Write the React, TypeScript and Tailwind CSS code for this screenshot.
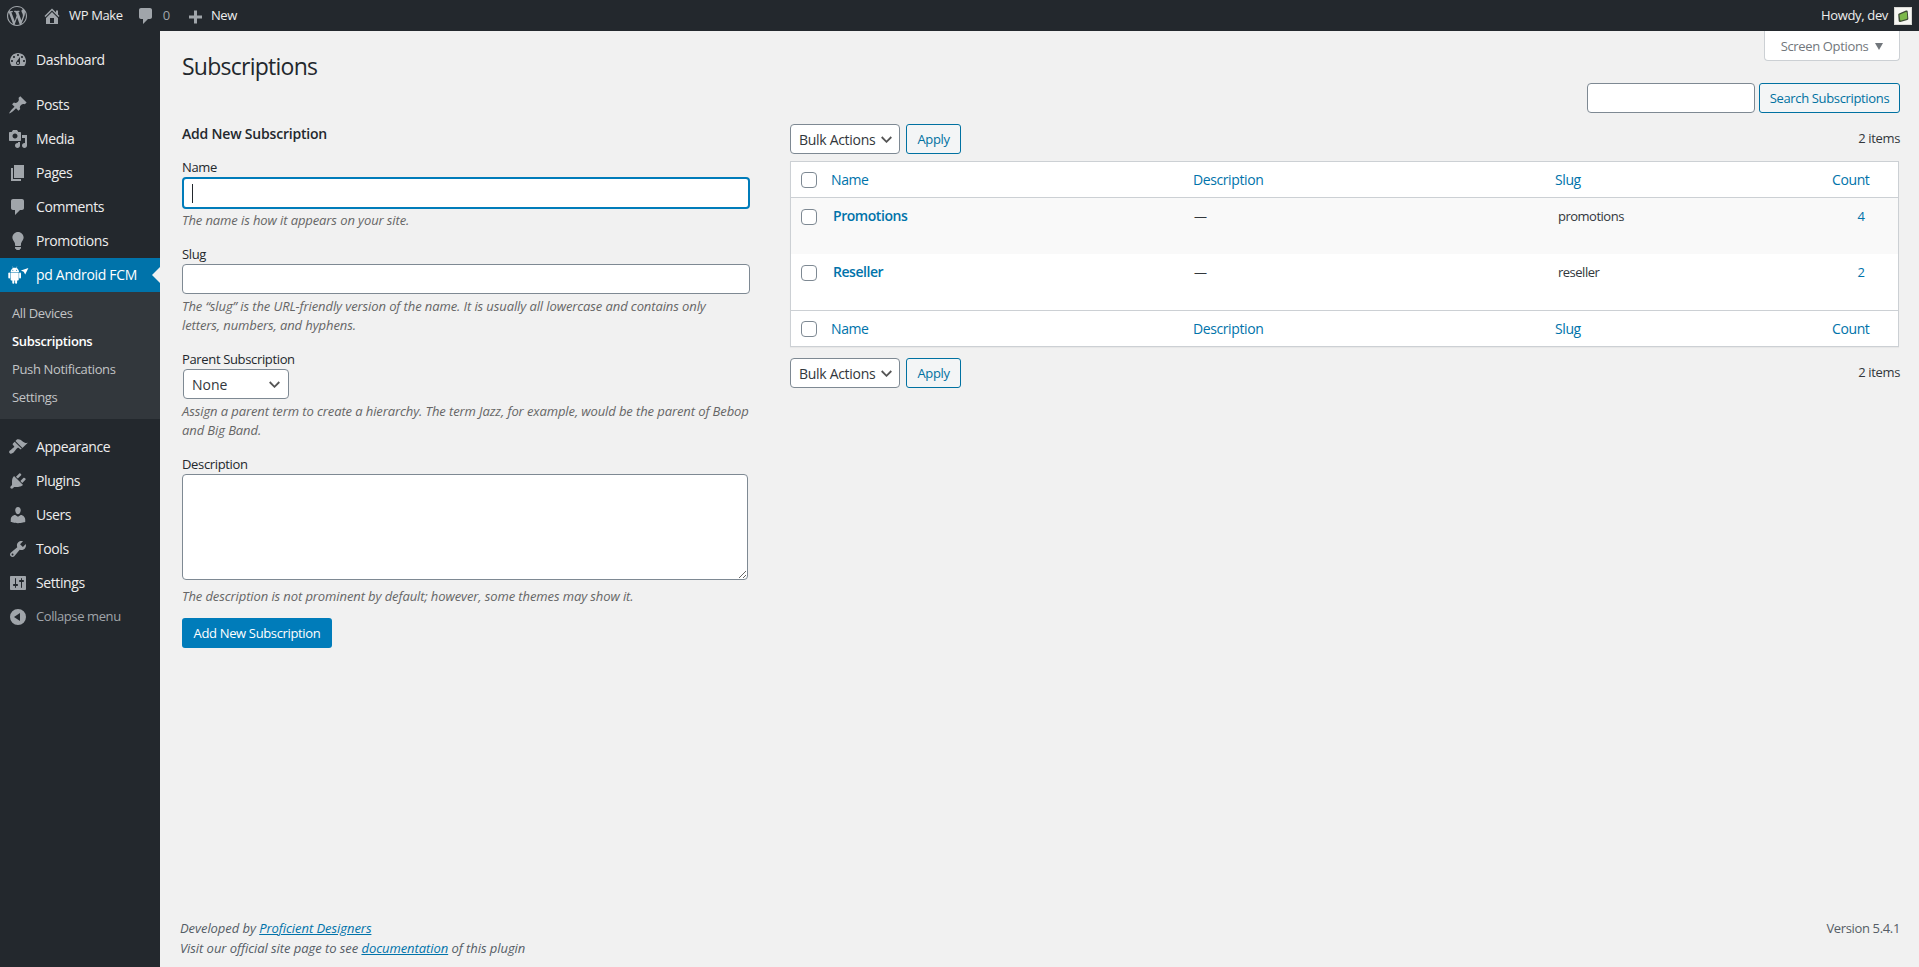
import React from "react";

const P = {
  wp: "M20 10c0-5.51-4.49-10-10-10C4.48 0 0 4.49 0 10c0 5.52 4.48 10 10 10 5.51 0 10-4.48 10-10zM7.78 15.37L4.37 6.22c.55-.02 1.17-.08 1.17-.08.5-.06.44-1.13-.06-1.11 0 0-1.45.11-2.37.11-.18 0-.37 0-.58-.01C4.12 2.69 6.87 1.11 10 1.11c2.33 0 4.45.87 6.05 2.34-.68-.11-1.65.39-1.65 1.58 0 .74.45 1.36.9 2.1.35.61.55 1.36.55 2.46 0 1.49-1.4 5-1.4 5l-3.03-8.37c.54-.02.82-.17.82-.17.5-.05.44-1.25-.06-1.22 0 0-1.44.12-2.38.12-.87 0-2.33-.12-2.33-.12-.5-.03-.56 1.2-.06 1.22l.92.08 1.26 3.41zM17.41 10c.24-.64.74-1.87.43-4.25.7 1.29 1.05 2.71 1.05 4.25 0 3.29-1.73 6.24-4.4 7.78.97-2.59 1.94-5.2 2.92-7.78zM6.1 18.09C3.12 16.65 1.11 13.53 1.11 10c0-1.3.23-2.48.72-3.59C3.25 10.3 4.67 14.2 6.1 18.09zm4.03-6.63l2.58 6.98c-.86.29-1.76.45-2.71.45-.79 0-1.57-.11-2.29-.33.81-2.38 1.62-4.74 2.42-7.1z",
  home: "M16 8.5l1.53 1.53-1.06 1.06L10 4.62l-6.47 6.47-1.06-1.06L10 2.5l4 4v-2h2v4zm-6-2.46l6 5.99V18H4v-5.97zM12 17v-5H8v5h4z",
  comment: "M5 2h9c1.1 0 2 .9 2 2v7c0 1.1-.9 2-2 2h-2l-5 5v-5H5c-1.1 0-2-.9-2-2V4c0-1.1.9-2 2-2z",
  plus: "M17 9.5v3h-5v5H9v-5H4v-3h5v-5h3v5h5z",
  dashboard: "M3.76 16h12.48c1.1-1.37 1.76-3.11 1.76-5 0-4.42-3.58-8-8-8s-8 3.58-8 8c0 1.89.66 3.63 1.76 5zM10 4c.55 0 1 .45 1 1s-.45 1-1 1-1-.45-1-1 .45-1 1-1zM6 6c.55 0 1 .45 1 1s-.45 1-1 1-1-.45-1-1 .45-1 1-1zm8 0c.55 0 1 .45 1 1s-.45 1-1 1-1-.45-1-1 .45-1 1-1zm-5.37 5.55L12 7v6c0 1.1-.9 2-2 2s-2-.9-2-2c0-.57.24-1.08.63-1.45zM4 10c.55 0 1 .45 1 1s-.45 1-1 1-1-.45-1-1 .45-1 1-1zm12 0c.55 0 1 .45 1 1s-.45 1-1 1-1-.45-1-1 .45-1 1-1zm-5 3c0-.55-.45-1-1-1s-1 .45-1 1 .45 1 1 1 1-.45 1-1z",
  pin: "M10.44 3.02l1.82-1.82 6.36 6.35-1.83 1.82c-1.05-.68-2.48-.57-3.41.36l-.75.75c-.92.93-1.04 2.35-.35 3.41l-1.83 1.82-2.41-2.41-2.8 2.79c-.42.42-3.38 2.71-3.8 2.29s1.86-3.39 2.28-3.81l2.79-2.79L4.1 9.36l1.83-1.82c1.05.69 2.48.57 3.4-.36l.75-.75c.93-.92 1.05-2.35.36-3.41z",
  media: "M13 11V4c0-.55-.45-1-1-1h-1.67L9 1H5L3.67 3H2c-.55 0-1 .45-1 1v7c0 .55.45 1 1 1h10c.55 0 1-.45 1-1zM7 4.5c1.38 0 2.5 1.12 2.5 2.5S8.38 9.5 7 9.5 4.5 8.38 4.5 7 5.62 4.5 7 4.5zM14 6h5v10.5c0 1.38-1.12 2.5-2.5 2.5S14 17.88 14 16.5s1.12-2.5 2.5-2.5c.17 0 .34.02.5.05V9h-3V6zm-4 8.05V13h2v3.5c0 1.38-1.12 2.5-2.5 2.5S7 17.88 7 16.5 8.12 14 9.5 14c.17 0 .34.02.5.05z",
  page: "M6 15V2h10v13H6zm-1 1h8v2H3V5h2v11z",
  bulb: "M10 1c3.11 0 5.63 2.52 5.63 5.62 0 1.84-2.03 4.58-2.03 4.58-.33.44-.6 1.25-.6 1.8v1c0 .55-.45 1-1 1H8c-.55 0-1-.45-1-1v-1c0-.55-.27-1.36-.6-1.8 0 0-2.02-2.74-2.02-4.58C4.38 3.52 6.89 1 10 1zM7 16.87V16h6v.87c0 .62-.13 1.13-.75 1.13H12c0 .62-.4 1-1.02 1h-2c-.61 0-.98-.38-.98-1h-.25c-.62 0-.75-.51-.75-1.13z",
  brush: "M14.48 11.06L7.41 3.99l1.5-1.5c.5-.56 2.3-.47 3.51.32 1.21.8 1.43 1.28 2.91 2.1 1.18.64 2.45 1.26 4.45.85zm-.71.71L6.7 4.7 4.93 6.47c-.39.39-.39 1.02 0 1.41l1.06 1.06c.39.39.39 1.03 0 1.42-.6.6-1.43 1.11-2.21 1.69-.35.26-.7.53-1.01.84C1.43 13.23.4 14.98 1.77 16.35c.95.95 1.97.45 2.93-.28.43-.33.85-.72 1.25-1.18.78-.8 1.34-1.56 1.83-2.16.5-.6 1.05-1.11 1.69-1.71.39-.39 1.03-.39 1.42 0l1.06 1.06c.39.39 1.02.39 1.41 0z",
  plug: "M13.11 4.36L9.87 7.6 8 5.73l3.24-3.24c.35-.34 1.05-.2 1.56.32.52.51.66 1.21.31 1.55zm-8 1.77l.91-1.12 9.01 9.01-1.19.84c-.71.71-2.63 1.16-3.82 1.16H6.14L4.9 17.26c-.59.59-1.54.59-2.12 0-.59-.58-.59-1.53 0-2.12l1.24-1.24v-3.88c0-1.13.4-3.19 1.09-3.89zm7.26 3.97l3.24-3.24c.34-.35 1.04-.21 1.55.31.52.51.66 1.21.31 1.55l-3.24 3.25z",
  users: "M10 9.25c-2.27 0-2.73-3.44-2.73-3.44C7 4.02 7.82 2 9.97 2c2.16 0 2.98 2.02 2.71 3.81 0 0-.41 3.44-2.68 3.44zm0 2.57L12.72 10c2.39 0 4.52 2.33 4.52 4.53v2.49s-3.65 1.13-7.24 1.13c-3.65 0-7.24-1.13-7.24-1.13v-2.49c0-2.25 1.94-4.48 4.47-4.48z",
  tools: "M16.68 9.77c-1.34 1.34-3.3 1.67-4.95.99l-5.41 6.52c-.99.99-2.59.99-3.58 0s-.99-2.59 0-3.57l6.52-5.42c-.68-1.65-.35-3.61.99-4.95 1.28-1.28 3.12-1.62 4.72-1.06l-2.89 2.89 2.82 2.82 2.86-2.87c.53 1.58.18 3.39-1.08 4.65zM3.81 16.21c.4.39 1.04.39 1.43 0 .4-.4.4-1.04 0-1.43-.39-.4-1.03-.4-1.43 0-.39.39-.39 1.03 0 1.43z",
  settings: "M18 16V4c0-.55-.45-1-1-1H3c-.55 0-1 .45-1 1v12c0 .55.45 1 1 1h14c.55 0 1-.45 1-1zM8 11h1c.55 0 1 .45 1 1s-.45 1-1 1H8v1.5c0 .28-.22.5-.5.5s-.5-.22-.5-.5V13H6c-.55 0-1-.45-1-1s.45-1 1-1h1V5.5c0-.28.22-.5.5-.5s.5.22.5.5V11zm5-2h-1c-.55 0-1-.45-1-1s.45-1 1-1h1V5.5c0-.28.22-.5.5-.5s.5.22.5.5V7h1c.55 0 1 .45 1 1s-.45 1-1 1h-1v5.5c0 .28-.22.5-.5.5s-.5-.22-.5-.5V9z",
  collapse: "M10 2a8 8 0 1 0 0 16 8 8 0 0 0 0-16zm2 4v8l-6-4z",
};

function Icon({ d, className }: { d: string; className?: string }) {
  return (
    <svg viewBox="0 0 20 20" className={className} fill="currentColor" fillRule="evenodd" aria-hidden="true">
      <path d={d} />
    </svg>
  );
}

function Android() {
  return (
    <svg viewBox="0 0 21 20" className="w-[21px] h-5 text-white" fill="currentColor" aria-hidden="true">
      <path d="M2.6 6.9C2.8 5 3.9 3.7 5.1 3.1L4.3 1.7l.4-.2.8 1.4c.8-.3 1.7-.3 2.6 0l.8-1.4.4.2-.8 1.4c1.3.6 2.3 1.9 2.6 3.8H2.6zm2.2-2.2a.5.5 0 1 0 0 1 .5.5 0 0 0 0-1zm3.8 0a.5.5 0 1 0 0 1 .5.5 0 0 0 0-1z" fillRule="evenodd" />
      <path d="M2.6 7.6h8.1v7c0 .6-.4 1-1 1h-.6v2.2a1 1 0 0 1-2 0v-2.2H6.3v2.2a1 1 0 0 1-2 0v-2.2h-.7c-.6 0-1-.4-1-1v-7z" />
      <rect x="0.3" y="7.6" width="1.9" height="5.8" rx="0.95" />
      <rect x="11.1" y="7.6" width="1.9" height="5.8" rx="0.95" />
      <path d="M12.9 5.4L20.4 3l-3.2 6.6-1.5-2.8-2.8-1.4z" />
    </svg>
  );
}

const font = "font-['Open_Sans','Noto_Sans',sans-serif]";

function MenuItem({ icon, label }: { icon: string; label: string }) {
  return (
    <li className="h-[34px] flex items-center">
      <Icon d={icon} className="w-5 h-5 ml-[8px] text-[#a0a5aa]" />
      <span className="ml-[8px] mb-[1px] text-[14px] text-[#eeeeee] tracking-[-0.4px]">{label}</span>
    </li>
  );
}

function Chevron({ className }: { className?: string }) {
  return (
    <svg viewBox="0 0 11 7" className={`w-[11px] h-[7px] pointer-events-none ${className ?? ""}`} fill="none" stroke="#555555" strokeWidth="1.8" aria-hidden="true">
      <path d="M.7 1l4.8 4.8L10.3 1" />
    </svg>
  );
}

function Bulk() {
  return (
    <div className="flex gap-[6px]">
      <div className="relative w-[110px] h-[30px]">
        <select className="appearance-none w-full h-full pl-[8px] pt-[1px] bg-white border border-[#7e8993] rounded-[4px] text-[14px] leading-[28px] text-[#32373c] tracking-[-0.3px]">
          <option>Bulk Actions</option>
        </select>
        <Chevron className="absolute right-[8px] top-[12px]" />
      </div>
      <button className="w-[55px] h-[30px] pt-[1px] border border-[#0071a1] rounded-[3px] bg-[#f3f5f6] text-[#0071a1] text-[13px] tracking-[-0.35px]">Apply</button>
    </div>
  );
}

function Check() {
  return <input type="checkbox" className="appearance-none block w-4 h-4 bg-white border border-[#7e8993] rounded-[4px]" />;
}

function HeadRow({ top }: { top: boolean }) {
  const edge = top ? "border-b" : "border-t";
  const c = `h-[36px] pl-[9px] text-left font-normal text-[14px] text-[#0073aa] tracking-[-0.4px] ${edge} border-[#ccd0d4]`;
  const count = `h-[36px] pl-[10px] text-left font-normal text-[14px] text-[#0073aa] tracking-[-0.4px] ${edge} border-[#ccd0d4]`;
  return (
    <tr>
      <th className={`h-[36px] pl-[10px] ${edge} border-[#ccd0d4]`}><Check /></th>
      <th className={c}>Name</th>
      <th className={c}>Description</th>
      <th className={c}>Slug</th>
      <th className={count}>Count</th>
    </tr>
  );
}

function Row({ name, slug, count, alt }: { name: string; slug: string; count: string; alt?: boolean }) {
  const bg = alt ? "bg-[#f9f9f9]" : "bg-white";
  return (
    <tr className={`${bg} h-[56px] align-top`}>
      <td className="pl-[10px] pt-[11px]"><Check /></td>
      <td className="pl-[11px] pt-[8px] text-[14px] leading-[20px] font-semibold text-[#0073aa] tracking-[-0.45px]">{name}</td>
      <td className="pl-[10px] pt-[8px] text-[13px] leading-[20px] text-[#32373c]">—</td>
      <td className="pl-[12px] pt-[8px] text-[13px] leading-[20px] text-[#32373c] tracking-[-0.5px]">{slug}</td>
      <td className="pr-[33px] pt-[8px] text-right text-[13px] leading-[20px] text-[#0073aa]">{count}</td>
    </tr>
  );
}

const hint = "italic text-[13px] leading-[19px] text-[#666666] tracking-[-0.1px]";
const label = "block text-[13px] leading-[19px] text-[#23282d] tracking-[-0.35px]";

export default function App() {
  return (
    <div className={`${font} h-[967px] flex flex-col bg-[#f1f1f1] overflow-hidden`}>
      <header className="h-[31px] shrink-0 bg-[#23282d] flex items-center text-[13px] text-[#eeeeee] tracking-[-0.35px]">
        <Icon d={P.wp} className="w-5 h-5 ml-[7px] text-[#a0a5aa]" />
        <Icon d={P.home} className="w-5 h-5 ml-[15px] text-[#a0a5aa]" />
        <span className="ml-[7px]">WP Make</span>
        <Icon d={P.comment} className="w-5 h-5 ml-[13px] text-[#a0a5aa]" />
        <span className="ml-[7px] text-[#a0a5aa]">0</span>
        <Icon d={P.plus} className="w-5 h-5 ml-[15px] text-[#a0a5aa]" />
        <span className="ml-[6px]">New</span>
        <span className="ml-auto">Howdy, dev</span>
        <svg viewBox="0 0 18 18" className="w-[18px] h-[18px] ml-[6px] mr-[7px]" aria-hidden="true">
          <rect width="18" height="18" fill="#d8d8d4" />
          <rect x="1" y="1" width="16" height="16" fill="#f6f6f2" />
          <path d="M5 6.5L12 3.6c1-.3 1.6.2 1.7 1l.6 6.8c0 .8-.3 1.2-1 1.5l-7 2c-.9.2-1.5-.2-1.6-1L4.2 7.8c0-.6.3-1 .8-1.3z" fill="#3c4a34" />
          <path d="M6 7.4L11.8 5c.6-.2 1 .1 1.1.7l.4 5.3c0 .5-.2.8-.7 1l-5.4 1.6c-.6.1-1-.1-1-.7L5.5 8.2c0-.4.1-.6.5-.8z" fill="#7cb84a" />
        </svg>
      </header>
      <div className="flex-1 flex min-h-0">
        <aside className="w-[160px] shrink-0 bg-[#23282d] pt-[12px]">
          <ul>
            <MenuItem icon={P.dashboard} label="Dashboard" />
          </ul>
          <ul className="mt-[11px]">
            <MenuItem icon={P.pin} label="Posts" />
            <MenuItem icon={P.media} label="Media" />
            <MenuItem icon={P.page} label="Pages" />
            <MenuItem icon={P.comment} label="Comments" />
            <MenuItem icon={P.bulb} label="Promotions" />
          </ul>
          <div className="relative h-[34px] bg-[#0073aa] flex items-center">
            <div className="ml-[8px]"><Android /></div>
            <span className="ml-[7px] mb-[1px] text-[14px] text-white tracking-[-0.3px]">pd Android FCM</span>
            <div className="absolute right-0 top-[9px] w-0 h-0 border-y-[8px] border-y-transparent border-r-[8px] border-r-[#f1f1f1]" />
          </div>
          <ul className="h-[127px] bg-[#32373c] pt-[7px] text-[13px] text-[#c2c4c6] tracking-[-0.35px]">
            <li className="h-[28px] leading-[28px] pl-[12px]">All Devices</li>
            <li className="h-[28px] leading-[28px] pl-[12px] font-semibold text-white">Subscriptions</li>
            <li className="h-[28px] leading-[28px] pl-[12px]">Push Notifications</li>
            <li className="h-[28px] leading-[28px] pl-[12px]">Settings</li>
          </ul>
          <ul className="mt-[11px]">
            <MenuItem icon={P.brush} label="Appearance" />
            <MenuItem icon={P.plug} label="Plugins" />
            <MenuItem icon={P.users} label="Users" />
            <MenuItem icon={P.tools} label="Tools" />
            <MenuItem icon={P.settings} label="Settings" />
            <li className="h-[34px] flex items-center">
              <Icon d={P.collapse} className="w-5 h-5 ml-[8px] text-[#a0a5aa]" />
              <span className="ml-[8px] text-[13px] text-[#a0a5aa] tracking-[-0.4px]">Collapse menu</span>
            </li>
          </ul>
        </aside>
        <main className="flex-1 min-w-0 flex flex-col">
          <div className="flex-1 pl-[22px] pr-[19px]">
            <div className="h-[52px] flex justify-between items-start">
              <h1 className="mt-[19px] text-[23px] leading-[32px] font-normal text-[#23282d] tracking-[-0.75px]">Subscriptions</h1>
              <div className="w-[136px] h-[30px] pt-[2px] flex items-center justify-center gap-[7px] bg-white border border-t-0 border-[#ccd0d4] rounded-b-[4px] text-[13px] text-[#72777c] tracking-[-0.35px]">
                <span>Screen Options</span>
                <span className="w-0 h-0 border-x-[4px] border-x-transparent border-t-[7px] border-t-[#72777c]" />
              </div>
            </div>
            <div className="h-[30px] flex justify-end gap-[4px]">
              <input className="w-[168px] h-[30px] bg-white border border-[#7e8993] rounded-[4px]" />
              <button className="w-[141px] h-[30px] pt-[1px] border border-[#0071a1] rounded-[3px] bg-[#f3f5f6] text-[#0071a1] text-[13px] tracking-[-0.35px]">Search Subscriptions</button>
            </div>
            <div className="flex">
              <form className="w-[568px] shrink-0">
                <h2 className="mt-[11px] text-[14px] leading-[20px] font-semibold text-[#23282d] tracking-[-0.2px]">Add New Subscription</h2>
                <label className={`${label} mt-[14px]`}>Name</label>
                <div className="relative h-[32px]">
                  <input className="w-full h-full bg-white border-2 border-[#007cba] rounded-[4px] outline-none" />
                  <div className="absolute left-[10px] top-[7px] w-px h-[19px] bg-[#23282d]" />
                </div>
                <p className={`${hint} mt-[2px]`}>The name is how it appears on your site.</p>
                <label className={`${label} mt-[15px]`}>Slug</label>
                <input className="block w-full h-[30px] bg-white border border-[#7e8993] rounded-[4px]" />
                <p className={`${hint} mt-[3px]`}>The “slug” is the URL-friendly version of the name. It is usually all lowercase and contains only<br />letters, numbers, and hyphens.</p>
                <label className={`${label} mt-[15px]`}>Parent Subscription</label>
                <div className="relative w-[106px] h-[30px] ml-px">
                  <select className="appearance-none w-full h-full pl-[8px] pt-[1px] bg-white border border-[#7e8993] rounded-[4px] text-[14px] text-[#32373c]">
                    <option>None</option>
                  </select>
                  <Chevron className="absolute right-[9px] top-[12px]" />
                </div>
                <p className={`${hint} mt-[3px]`}>Assign a parent term to create a hierarchy. The term Jazz, for example, would be the parent of Bebop<br />and Big Band.</p>
                <label className={`${label} mt-[15px]`}>Description</label>
                <textarea className="block w-[566px] h-[106px] bg-white border border-[#7e8993] rounded-[4px]" />
                <p className={`${hint} mt-[7px]`}>The description is not prominent by default; however, some themes may show it.</p>
                <button type="button" className="mt-[12px] w-[150px] h-[30px] pt-[1px] bg-[#007cba] rounded-[3px] text-white text-[13px] tracking-[-0.35px]">Add New Subscription</button>
              </form>
              <section className="ml-[40px] flex-1 min-w-0">
                <div className="mt-[11px] flex items-center justify-between">
                  <Bulk />
                  <span className="text-[13px] text-[#32373c] tracking-[-0.35px]">2 items</span>
                </div>
                <table className="mt-[7px] w-[1109px] table-fixed border-separate border-spacing-0 border border-[#ccd0d4] bg-white shadow-[0_1px_1px_rgba(0,0,0,0.04)]">
                  <colgroup>
                    <col className="w-[31px]" />
                    <col className="w-[362px]" />
                    <col className="w-[362px]" />
                    <col className="w-[276px]" />
                    <col />
                  </colgroup>
                  <thead><HeadRow top /></thead>
                  <tbody>
                    <Row name="Promotions" slug="promotions" count="4" alt />
                    <Row name="Reseller" slug="reseller" count="2" />
                  </tbody>
                  <tfoot><HeadRow top={false} /></tfoot>
                </table>
                <div className="mt-[11px] flex items-center justify-between">
                  <Bulk />
                  <span className="text-[13px] text-[#32373c] tracking-[-0.35px]">2 items</span>
                </div>
              </section>
            </div>
          </div>
          <footer className="pl-[20px] pr-[19px] pb-[9px] flex justify-between text-[13px] leading-[20px] text-[#555d66]">
            <div className="italic tracking-[-0.06px]">
              <p>Developed by <a className="text-[#0073aa] underline">Proficient Designers</a></p>
              <p>Visit our official site page to see <a className="text-[#0073aa] underline">documentation</a> of this plugin</p>
            </div>
            <span className="tracking-[-0.35px]">Version 5.4.1</span>
          </footer>
        </main>
      </div>
    </div>
  );
}
